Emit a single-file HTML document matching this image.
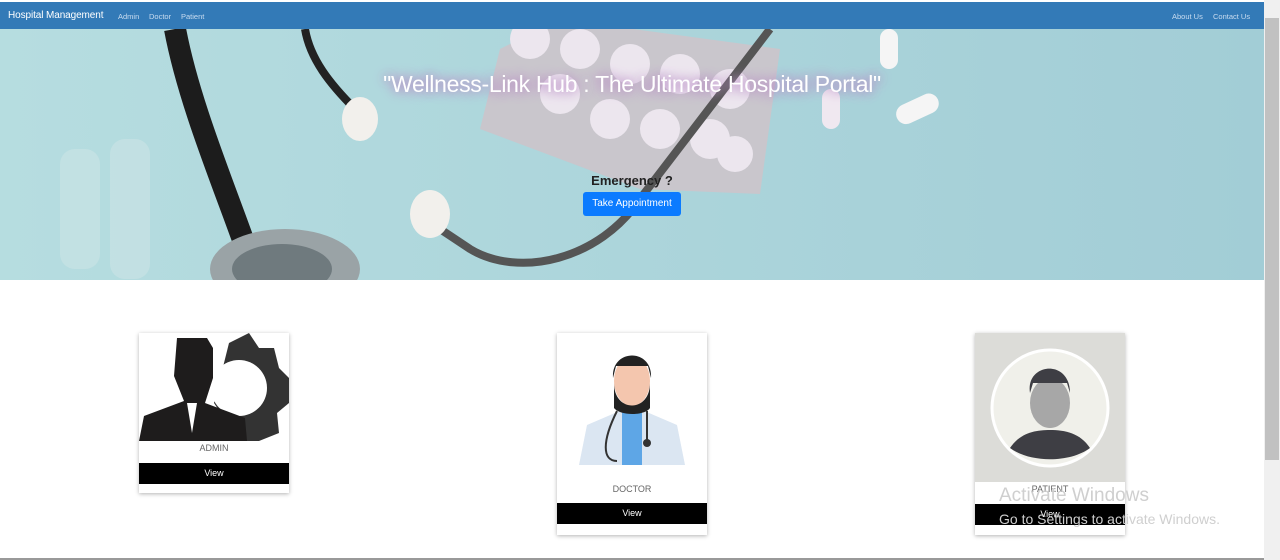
<!DOCTYPE html>
<html><head><meta charset="utf-8"><style>
*{margin:0;padding:0;box-sizing:border-box}
body{width:1280px;height:560px;overflow:hidden;background:#fff;font-family:"Liberation Sans",sans-serif;position:relative}
.nav{position:absolute;left:0;top:2px;width:1264px;height:27px;background:#337ab7;color:#fff}
.nav .brand{position:absolute;left:8px;top:8px;font-size:10px;letter-spacing:-0.1px}
.nav .l{position:absolute;top:10px;font-size:7.5px;color:#c9dcf0}
.hero{position:absolute;left:0;top:29px;width:1264px;height:251px;background:#a8d3d6;overflow:hidden}
.title{position:absolute;left:0;width:1264px;top:42px;text-align:center;color:#fff;font-size:23px;letter-spacing:-0.3px;text-shadow:0 0 10px #b080c0,0 0 14px #c9a0d0}
.em{position:absolute;left:0;width:1264px;top:172px;text-align:center;font-size:13px;font-weight:bold;color:#222}
.btn{position:absolute;left:583px;top:192px;width:98px;height:24px;background:#0b7bff;color:#fff;font-size:10px;border-radius:3px;text-align:center;line-height:24px}
.card{position:absolute;width:150px;background:#fff;box-shadow:0 1px 4px rgba(0,0,0,.3)}
.lbl{position:absolute;left:0;width:150px;text-align:center;font-size:9px;color:#666}
.view{position:absolute;left:0;width:150px;height:21px;background:#000;color:#fff;font-size:9px;text-align:center;line-height:21px}
.sb{position:absolute;left:1264px;top:0;width:16px;height:560px;background:#f0f0f0}
.thumb{position:absolute;left:1265px;top:18px;width:14px;height:442px;background:#c1c1c1}
.aw{position:absolute;left:999px;top:485px;color:#cfcfcf;font-size:19px}
.aw2{position:absolute;left:999px;top:511px;color:#cfcfcf;font-size:14px}
</style></head><body>
<div class="nav"><span class="brand">Hospital Management</span>
<span class="l" style="left:118px">Admin</span><span class="l" style="left:149px">Doctor</span><span class="l" style="left:181px">Patient</span>
<span class="l" style="left:1172px">About Us</span><span class="l" style="left:1213px">Contact Us</span></div>
<div class="hero">
<svg width="1264" height="251" style="position:absolute;left:0;top:0">
<defs><linearGradient id="g" x1="0" x2="1"><stop offset="0" stop-color="#b6dde0"/><stop offset="1" stop-color="#a2cdd6"/></linearGradient></defs>
<rect width="1264" height="251" fill="url(#g)"/>
<polygon points="500,20 560,-10 780,20 760,165 640,160 480,100" fill="#c9c6cc"/>
<g fill="#ece6ee"><circle cx="530" cy="10" r="20"/><circle cx="580" cy="20" r="20"/><circle cx="630" cy="35" r="20"/><circle cx="680" cy="45" r="20"/><circle cx="730" cy="60" r="20"/><circle cx="560" cy="65" r="20"/><circle cx="610" cy="90" r="20"/><circle cx="660" cy="100" r="20"/><circle cx="710" cy="110" r="20"/><circle cx="735" cy="125" r="18"/></g>
<path d="M175 0 C190 80 230 170 255 245" stroke="#1c1c1c" stroke-width="22" fill="none"/>
<path d="M305 0 C310 30 330 55 355 80" stroke="#222" stroke-width="8" fill="none"/>
<ellipse cx="360" cy="90" rx="18" ry="22" fill="#f2f0ec"/>
<path d="M770 0 L640 170 C600 230 520 250 470 220 L440 200" stroke="#555" stroke-width="8" fill="none"/>
<ellipse cx="430" cy="185" rx="20" ry="24" fill="#f2f0ec"/>
<ellipse cx="285" cy="240" rx="75" ry="40" fill="#9aa3a6"/>
<ellipse cx="282" cy="240" rx="50" ry="25" fill="#6f7a7e"/>
<rect x="880" y="0" width="18" height="40" rx="9" fill="#f5f5f5"/>
<rect x="822" y="60" width="18" height="40" rx="9" fill="#f0e8f0"/>
<rect x="895" y="70" width="45" height="20" rx="10" fill="#f5f5f5" transform="rotate(-25 917 80)"/>
<rect x="60" y="120" width="40" height="120" rx="15" fill="#c8e2e4" opacity=".7"/>
<rect x="110" y="110" width="40" height="140" rx="15" fill="#c8e2e4" opacity=".7"/>
</svg>
<div class="title">"Wellness-Link Hub : The Ultimate Hospital Portal"</div>
</div>
<div class="em" style="top:173px">Emergency ?</div>
<div class="btn">Take Appointment</div>

<div class="card" style="left:139px;top:333px;height:160px">
<svg width="150" height="108" style="position:absolute;left:0;top:0">
<path d="M90 10 L110 0 L120 15 L135 15 L140 35 L150 45 L150 70 L138 80 L140 100 L120 108 L100 108 L75 70 Z" fill="#333"/>
<circle cx="100" cy="55" r="28" fill="#fff"/>
<path d="M38 5 h30 l6 10 v30 l-8 25 l40 15 l2 23 H0 l5-25 l40-15 l-10-25 Z" fill="#1e1c1c"/>
<path d="M48 70 h10 l-5 30 Z" fill="#fff"/>
</svg>
<div class="lbl" style="top:110px">ADMIN</div>
<div class="view" style="top:130px">View</div>
</div>

<div class="card" style="left:557px;top:333px;height:202px">
<svg width="150" height="135" style="position:absolute;left:0;top:0">
<path d="M22 132 l8-40 l35-15 h20 l35 15 l8 40 Z" fill="#dbe6f2"/>
<rect x="65" y="75" width="20" height="57" fill="#5ea6e6"/>
<ellipse cx="75" cy="48" rx="18" ry="25" fill="#f4c6ae"/>
<path d="M57 50 c0 30 36 30 36 0 v25 c-5 8 -30 8 -36 0Z" fill="#222"/>
<path d="M56 45 c-2-30 40-30 38 0 l-3-12 h-32Z" fill="#222"/>
<path d="M60 78 c-15 30 -15 50 0 50 M90 78 v30" stroke="#333" stroke-width="2" fill="none"/>
<circle cx="90" cy="110" r="4" fill="#333"/>
</svg>
<div class="lbl" style="top:151px">DOCTOR</div>
<div class="view" style="top:170px">View</div>
</div>

<div class="card" style="left:975px;top:333px;height:202px">
<div style="position:absolute;left:0;top:0;width:150px;height:149px;background:#dcdcd8"></div>
<svg width="150" height="149" style="position:absolute;left:0;top:0">
<circle cx="75" cy="75" r="58" fill="#f0f0ea" stroke="#fff" stroke-width="3"/>
<ellipse cx="75" cy="70" rx="20" ry="25" fill="#a7a7a7"/>
<path d="M55 60 c-5-30 40-35 40 0 l-3-10 h-34Z" fill="#3e3e44"/>
<path d="M35 115 c10-15 25-18 40-18 s30 3 40 18 c-20 15 -60 15 -80 0Z" fill="#3e3e44"/>
</svg>
<div class="lbl" style="top:151px">PATIENT</div>
<div class="view" style="top:171px">View</div>
</div>

<div class="aw">Activate Windows</div>
<div class="aw2">Go to Settings to activate Windows.</div>
<div class="sb"></div><div class="thumb"></div>
<div style="position:absolute;left:0;top:558px;width:1264px;height:2px;background:#999"></div>
</body></html>
